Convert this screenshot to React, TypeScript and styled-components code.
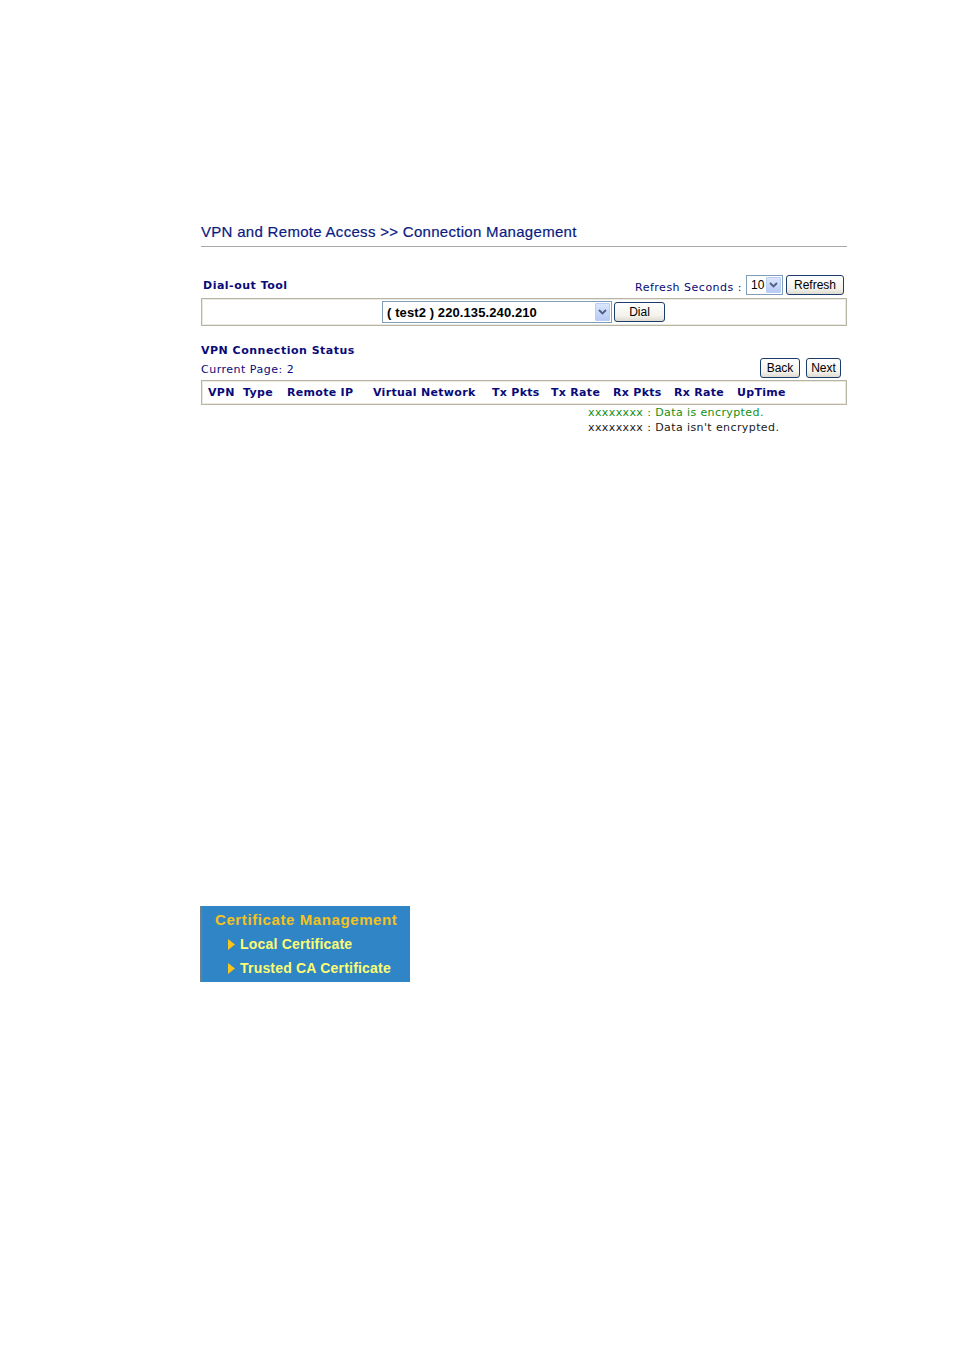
import styled, { createGlobalStyle } from 'styled-components'

const GlobalStyle = createGlobalStyle`
  html, body {
    margin: 0;
    padding: 0;
    background: #ffffff;
  }
  body {
    width: 954px;
    min-height: 1351px;
    font-family: "DejaVu Sans", Verdana, sans-serif;
  }
`

const StyledPage = styled.div`
  padding: 223px 0 0 201px;
  width: 646px;
`

const StyledTitle = styled.h1`
  margin: 0;
  font-family: "Liberation Sans", Arial, sans-serif;
  font-size: 15px;
  font-weight: normal;
  color: #0a1a80;
  line-height: 18px;
  letter-spacing: 0.3px;
  padding-bottom: 5px;
  border-bottom: 1px solid #a8a8a8;
  -webkit-text-stroke: 0.2px #0a1a80;
`

const StyledToolHeader = styled.div`
  display: flex;
  justify-content: space-between;
  align-items: flex-end;
  margin-top: 28px;
  padding: 0 3px 0 2px;
`

const SmallLabel = styled.span<{ bold?: boolean }>`
  font-family: "DejaVu Sans", Verdana, sans-serif;
  font-size: 11px;
  font-weight: ${({ bold }) => (bold ? 'bold' : 'normal')};
  color: #0a0a78;
  letter-spacing: 0.5px;
`

const StyledRefresh = styled.div`
  display: flex;
  align-items: center;
  gap: 3px;
`

const StyledToolLabel = styled(SmallLabel)`
  margin-bottom: 3px;
`

const StyledRefreshLabel = styled(SmallLabel)`
  margin-top: 4px;
  margin-right: 1px;
`

const StyledSelect = styled.div<{ width: number; bold?: boolean }>`
  display: flex;
  align-items: center;
  justify-content: space-between;
  box-sizing: border-box;
  width: ${({ width }) => width}px;
  height: ${({ bold }) => (bold ? 22 : 20)}px;
  border: 1px solid #7f9db9;
  background: #ffffff;
  padding: 1px;
  font-family: "Liberation Sans", Arial, sans-serif;
  font-size: ${({ bold }) => (bold ? 13 : 12)}px;
  font-weight: ${({ bold }) => (bold ? 'bold' : 'normal')};
  letter-spacing: ${({ bold }) => (bold ? '0.1px' : '0')};
  color: #000000;
`

const StyledSelectText = styled.span`
  padding-left: 3px;
  white-space: nowrap;
`

const StyledArrow = styled.span`
  display: flex;
  align-items: center;
  justify-content: center;
  width: 15px;
  height: 100%;
  box-sizing: border-box;
  background: linear-gradient(#dbe6fd, #b7cbf7);
  border: 1px solid #b9cdf5;
  border-radius: 1px;
`

const StyledButton = styled.button<{ width: number }>`
  box-sizing: border-box;
  width: ${({ width }) => width}px;
  height: 20px;
  padding: 0;
  border: 1px solid #1c3d6c;
  border-radius: 3px;
  background: linear-gradient(#ffffff, #f3f2ec 70%, #dedbd0);
  font-family: "Liberation Sans", Arial, sans-serif;
  font-size: 12px;
  color: #000000;
  cursor: pointer;
`

const StyledDialBox = styled.div`
  display: flex;
  align-items: center;
  gap: 2px;
  box-sizing: border-box;
  height: 28px;
  margin-top: 3px;
  padding-left: 180px;
  border: 1px solid #b9b5a6;
  box-shadow: inset 0 0 0 1px #ebe9e0;
`

const StyledSectionTitle = styled(SmallLabel)`
  display: block;
  margin-top: 18px;
  line-height: 13px;
`

const StyledPageRow = styled.div`
  display: flex;
  justify-content: space-between;
  align-items: flex-end;
  margin-top: 1px;
  padding-right: 6px;
`

const StyledPager = styled.div`
  display: flex;
  gap: 6px;
  padding-bottom: 2px;
`

const StyledPageLabel = styled(SmallLabel)`
  line-height: 14px;
  margin-bottom: 3px;
`

const StyledTableHead = styled.div`
  display: grid;
  grid-template-columns: 35px 44px 86px 119px 59px 62px 61px 63px 1fr;
  align-items: center;
  box-sizing: border-box;
  height: 25px;
  padding-left: 6px;
  border: 1px solid #b9b5a6;
  box-shadow: inset 0 0 0 1px #ebe9e0;
`

const StyledHeadCell = styled.span`
  font-family: "DejaVu Sans", Verdana, sans-serif;
  font-size: 11px;
  font-weight: bold;
  color: #0a0a78;
  letter-spacing: 0.3px;
  white-space: nowrap;
`

const StyledLegend = styled.div`
  padding: 0 0 0 387px;
  display: flex;
  flex-direction: column;
`

const StyledLegendLine = styled.span<{ encrypted?: boolean }>`
  font-family: "DejaVu Sans", Verdana, sans-serif;
  font-size: 11px;
  line-height: 15px;
  letter-spacing: 0.4px;
  color: ${({ encrypted }) => (encrypted ? '#139013' : '#1a1a1a')};
`

const StyledMenu = styled.nav`
  width: 210px;
  margin: 471px 0 0 200px;
  box-sizing: border-box;
  padding: 4px 0 2px 13px;
  background: #2f85c5;
  border-left: 2px solid #6e7f8d;
  font-family: "Liberation Sans", Arial, sans-serif;
  font-weight: bold;
`

const StyledMenuTitle = styled.div`
  font-size: 15px;
  line-height: 20px;
  margin-bottom: 2px;
  color: #f5c21b;
  letter-spacing: 0.6px;
`

const StyledMenuItem = styled.div`
  display: flex;
  align-items: center;
  gap: 5px;
  padding-left: 13px;
  font-size: 14px;
  line-height: 24px;
  letter-spacing: 0.2px;
  color: #fdfd72;
`

const Triangle = () => (
  <svg width="7" height="11" viewBox="0 0 7 11">
    <polygon points="0,0 7,5.5 0,11" fill="#f8c51c" />
  </svg>
)

const Chevron = () => (
  <svg width="9" height="6" viewBox="0 0 9 6">
    <polyline points="1,1 4.5,4.5 8,1" fill="none" stroke="#4d6185" strokeWidth="1.8" />
  </svg>
)

const columns = ['VPN', 'Type', 'Remote IP', 'Virtual Network', 'Tx Pkts', 'Tx Rate', 'Rx Pkts', 'Rx Rate', 'UpTime']

const App = () => {
  return (
    <>
      <GlobalStyle />
      <StyledPage>
        <StyledTitle>VPN and Remote Access &gt;&gt; Connection Management</StyledTitle>

        <StyledToolHeader>
          <StyledToolLabel bold>Dial-out Tool</StyledToolLabel>
          <StyledRefresh>
            <StyledRefreshLabel>Refresh Seconds :</StyledRefreshLabel>
            <StyledSelect width={37}>
              <StyledSelectText>10</StyledSelectText>
              <StyledArrow>
                <Chevron />
              </StyledArrow>
            </StyledSelect>
            <StyledButton width={58}>Refresh</StyledButton>
          </StyledRefresh>
        </StyledToolHeader>

        <StyledDialBox>
          <StyledSelect width={230} bold>
            <StyledSelectText>( test2 ) 220.135.240.210</StyledSelectText>
            <StyledArrow>
              <Chevron />
            </StyledArrow>
          </StyledSelect>
          <StyledButton width={51}>Dial</StyledButton>
        </StyledDialBox>

        <StyledSectionTitle bold>VPN Connection Status</StyledSectionTitle>
        <StyledPageRow>
          <StyledPageLabel>Current Page: 2</StyledPageLabel>
          <StyledPager>
            <StyledButton width={40}>Back</StyledButton>
            <StyledButton width={35}>Next</StyledButton>
          </StyledPager>
        </StyledPageRow>

        <StyledTableHead>
          {columns.map((c) => (
            <StyledHeadCell key={c}>{c}</StyledHeadCell>
          ))}
        </StyledTableHead>

        <StyledLegend>
          <StyledLegendLine encrypted>xxxxxxxx : Data is encrypted.</StyledLegendLine>
          <StyledLegendLine>xxxxxxxx : Data isn't encrypted.</StyledLegendLine>
        </StyledLegend>
      </StyledPage>

      <StyledMenu>
        <StyledMenuTitle>Certificate Management</StyledMenuTitle>
        <StyledMenuItem>
          <Triangle />
          Local Certificate
        </StyledMenuItem>
        <StyledMenuItem>
          <Triangle />
          Trusted CA Certificate
        </StyledMenuItem>
      </StyledMenu>
    </>
  )
}

export default App
